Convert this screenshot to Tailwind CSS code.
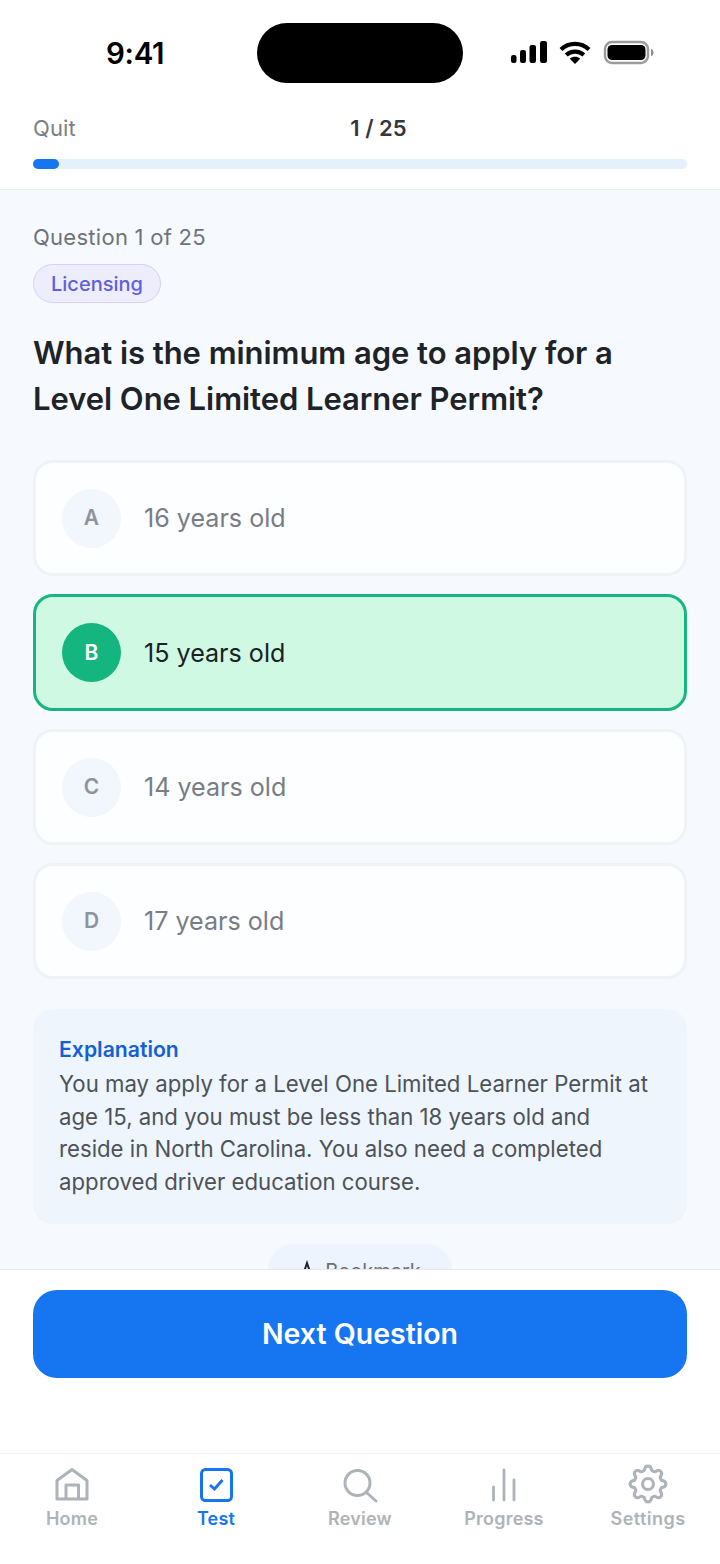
<!DOCTYPE html>
<html>
<head>
<meta charset="utf-8">
<script src="https://cdn.jsdelivr.net/npm/@tailwindcss/browser@4"></script>
</head>
<body class="m-0">
<div class="w-[720px] h-[1564px] flex flex-col bg-white overflow-hidden font-['Inter',sans-serif]">
  <!-- status bar -->
  <div class="h-[106px] shrink-0 relative">
    <div class="absolute left-[106px] top-[36px] text-[29.5px] leading-[34px] font-semibold text-black tracking-[-0.3px]">9:41</div>
    <div class="absolute left-[257px] top-[23px] w-[206px] h-[60px] rounded-[30px] bg-black"></div>
    <svg class="absolute left-[510px] top-[41px]" width="38" height="23" viewBox="0 0 38 23" fill="#000">
      <rect x="1" y="14" width="5.5" height="8" rx="2.2"/><rect x="10" y="9" width="6" height="13" rx="2.2"/><rect x="19.5" y="4" width="6.5" height="18" rx="2.2"/><rect x="30" y="0" width="7" height="22" rx="2.2"/>
    </svg>
    <svg class="absolute left-[558px] top-[40px]" width="34" height="25" viewBox="0 0 34 25" fill="none" stroke="#000" stroke-width="4.2">
      <path d="M3 9.5C10.8 2 23.2 2 31 9.5"/><path d="M8.2 15C13 10.6 21 10.6 25.8 15"/><path d="M17 24L11.8 18.8C14.8 16.2 19.2 16.2 22.2 18.8Z" fill="#000" stroke="none"/>
    </svg>
    <svg class="absolute left-[602px] top-[40px]" width="54" height="26" viewBox="0 0 54 26" fill="none">
      <rect x="3" y="2" width="43" height="21" rx="7" stroke="#9b9b9b" stroke-width="2.4"/>
      <rect x="5.5" y="5" width="38" height="15" rx="4.5" fill="#000"/>
      <path d="M49 9C50.8 9.5 51.5 11 51.5 12.5C51.5 14 50.8 15.5 49 16Z" fill="#8d8d8d"/>
    </svg>
  </div>
  <!-- header -->
  <div class="h-[84px] shrink-0 border-b border-[#e9edf1] px-[33px]">
    <div class="grid grid-cols-3 items-center h-[44px]">
      <span class="text-[22px] leading-[44px] text-[#7b7f85] tracking-[0.1px]">Quit</span>
      <span class="text-[22px] leading-[44px] font-semibold text-[#33373c] text-center ml-[37px] whitespace-nowrap">1 / 25</span>
    </div>
    <div class="mt-[9px] h-[10px] rounded-full bg-[#e4f0fc]">
      <div class="h-[10px] w-[26px] rounded-full bg-[#1675f0]"></div>
    </div>
  </div>
  <!-- main -->
  <div class="flex-1 min-h-0 overflow-hidden bg-[#f6fafe] px-[33px] pt-[30px]">
    <div class="text-[22px] leading-[34px] text-[#6f7378] tracking-[0.27px]">Question 1 of 25</div>
    <div class="mt-[10px] inline-flex items-center h-[39px] px-[17px] rounded-full bg-[#ededfc] border border-[#d3d2f6] text-[20px] font-medium text-[#5f5fdc]">Licensing</div>
    <h1 class="mt-[27px] text-[31px] leading-[46px] font-semibold text-[#1e2328] tracking-[-0.05px]">What is the minimum age to apply for a<br>Level One Limited Learner Permit?</h1>
    <div class="mt-[38px] flex flex-col gap-[18px]">
      <div class="h-[116px] rounded-[20px] border-[3px] border-[#eff3f6] bg-[#fdfeff] flex items-center pl-[26px]">
        <div class="w-[59px] h-[59px] rounded-full bg-[#f2f6fd] flex items-center justify-center text-[21px] font-semibold text-[#8f949c]">A</div>
        <div class="ml-[23px] mt-[2px] text-[25.1px] text-[#797d83]">16 years old</div>
      </div>
      <div class="h-[117px] rounded-[20px] border-[3px] border-[#17b67f] bg-[#d0f9e4] flex items-center pl-[26px]">
        <div class="w-[59px] h-[59px] rounded-full bg-[#14b57e] flex items-center justify-center text-[21px] font-semibold text-white">B</div>
        <div class="ml-[23px] mt-[2px] text-[25.1px] text-[#1c2126]">15 years old</div>
      </div>
      <div class="h-[116px] rounded-[20px] border-[3px] border-[#eff3f6] bg-[#fdfeff] flex items-center pl-[26px]">
        <div class="w-[59px] h-[59px] rounded-full bg-[#f2f6fd] flex items-center justify-center text-[21px] font-semibold text-[#8f949c]">C</div>
        <div class="ml-[23px] mt-[2px] text-[25.1px] text-[#797d83]">14 years old</div>
      </div>
      <div class="h-[116px] rounded-[20px] border-[3px] border-[#eff3f6] bg-[#fdfeff] flex items-center pl-[26px]">
        <div class="w-[59px] h-[59px] rounded-full bg-[#f2f6fd] flex items-center justify-center text-[21px] font-semibold text-[#8f949c]">D</div>
        <div class="ml-[23px] mt-[2px] text-[25.1px] text-[#797d83]">17 years old</div>
      </div>
    </div>
    <div class="mt-[30px] h-[215px] rounded-[20px] bg-[#eef5fd] px-[26px] pt-[23px]">
      <div class="text-[21.2px] leading-[34px] font-semibold text-[#1360d6]">Explanation</div>
      <p class="mt-[2px] text-[22.2px] leading-[32.6px] text-[#4d5258]">You may apply for a Level One Limited Learner Permit at<br>age 15, and you must be less than 18 years old and<br>reside in North Carolina. You also need a completed<br>approved driver education course.</p>
    </div>
    <div class="mt-[20px] mx-auto w-[184px] h-[52px] rounded-full bg-[#edf4fd] flex items-start justify-center gap-[10px] pt-[12px] text-[20px] text-[#6b7076]">
      <svg class="mt-[4px]" width="16" height="20" viewBox="0 0 16 20" fill="none" stroke="#222" stroke-width="2"><path d="M3 18L8 3L13 18"/></svg><span>Bookmark</span>
    </div>
  </div>
  <!-- action -->
  <div class="h-[184px] shrink-0 border-t border-[#e5e8ec] bg-white px-[33px] pt-[20px]">
    <div class="h-[88px] rounded-[24px] bg-[#1675f0] flex items-center justify-center text-[28.5px] font-semibold text-white">Next Question</div>
  </div>
  <!-- tabs -->
  <div class="h-[111px] shrink-0 border-t border-[#f1f3f5] bg-white grid grid-cols-[144px_144px_144px_144px_144px] pt-[12px]">
    <div class="flex flex-col items-center">
      <svg width="38" height="38" viewBox="0 0 38 38" fill="none" stroke="#aeb3ba" stroke-width="3" stroke-linejoin="round"><path d="M4 33V14.5L19 3.5L34 14.5V33Z"/><path d="M13 33V19H25.5V33"/></svg>
      <span class="mt-[2px] text-[18px] leading-[26px] font-semibold text-[#aeb3ba] tracking-[0.2px]">Home</span>
    </div>
    <div class="flex flex-col items-center">
      <svg width="38" height="38" viewBox="0 0 38 38" fill="none" stroke="#1675f0"><rect x="4.5" y="3.5" width="30" height="31" rx="4" stroke-width="3"/><path d="M13 19L17.5 23L25.5 14" stroke-width="3"/></svg>
      <span class="mt-[2px] text-[18px] leading-[26px] font-semibold text-[#1675f0] tracking-[0.2px]">Test</span>
    </div>
    <div class="flex flex-col items-center">
      <svg width="38" height="38" viewBox="0 0 38 38" fill="none" stroke="#aeb3ba" stroke-width="3" stroke-linecap="round"><circle cx="16.5" cy="17" r="12.5"/><path d="M26 27L35 35"/></svg>
      <span class="mt-[2px] text-[18px] leading-[26px] font-semibold text-[#aeb3ba] tracking-[0.2px]">Review</span>
    </div>
    <div class="flex flex-col items-center">
      <svg width="38" height="38" viewBox="0 0 38 38" fill="none" stroke="#aeb3ba" stroke-width="2.8" stroke-linecap="round"><path d="M8.5 21V34"/><path d="M19 4V34"/><path d="M29 14V34"/></svg>
      <span class="mt-[2px] text-[18px] leading-[26px] font-semibold text-[#aeb3ba] tracking-[0.2px]">Progress</span>
    </div>
    <div class="flex flex-col items-center">
      <svg class="mt-[-3px] mb-[-1px]" width="42" height="42" viewBox="0 0 40 40" fill="none" stroke="#aeb3ba" stroke-width="2.9" stroke-linejoin="round">
        <path d="M35 17.02A3.2 3.2 0 0 1 35 22.98A3.2 3.2 0 0 0 32.72 28.5A3.2 3.2 0 0 1 28.5 32.72A3.2 3.2 0 0 0 22.98 35A3.2 3.2 0 0 1 17.02 35A3.2 3.2 0 0 0 11.5 32.72A3.2 3.2 0 0 1 7.28 28.5A3.2 3.2 0 0 0 5 22.98A3.2 3.2 0 0 1 5 17.02A3.2 3.2 0 0 0 7.28 11.5A3.2 3.2 0 0 1 11.5 7.28A3.2 3.2 0 0 0 17.02 5A3.2 3.2 0 0 1 22.98 5A3.2 3.2 0 0 0 28.5 7.28A3.2 3.2 0 0 1 32.72 11.5A3.2 3.2 0 0 0 35 17.02Z"/>
        <circle cx="20" cy="20" r="5.2"/>
      </svg>
      <span class="mt-[2px] text-[18px] leading-[26px] font-semibold text-[#aeb3ba] tracking-[0.45px]">Settings</span>
    </div>
  </div>
</div>
</body>
</html>
